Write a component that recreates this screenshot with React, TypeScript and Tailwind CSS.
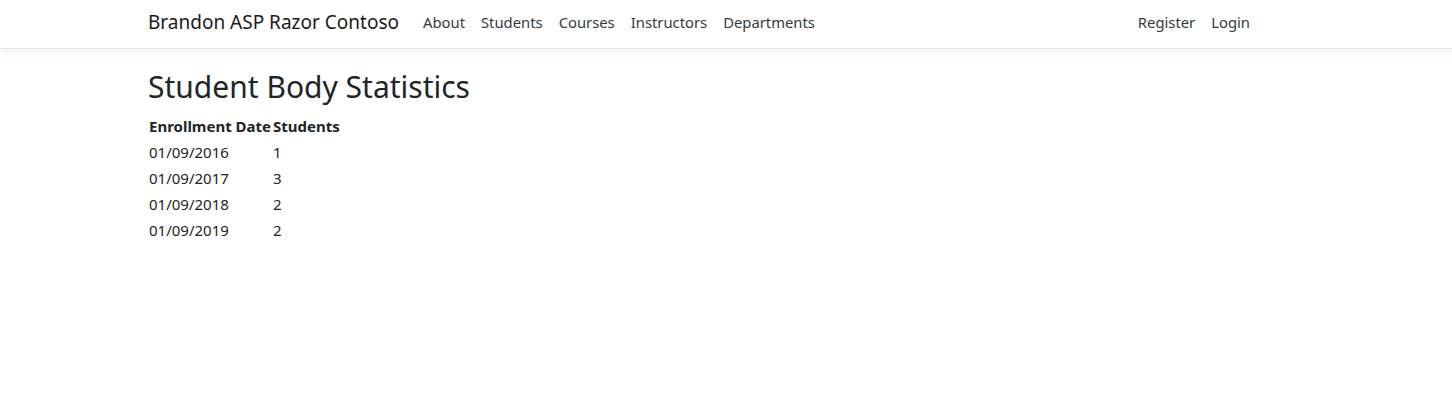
const rows = [
  { date: '01/09/2016', count: 1 },
  { date: '01/09/2017', count: 3 },
  { date: '01/09/2018', count: 2 },
  { date: '01/09/2019', count: 2 },
];

export default function App() {
  return (
    <div className="min-h-[400px] bg-white text-[#212529] font-['Noto_Sans',sans-serif]">
      <header className="h-[49px] border-b border-[#e5e5e5] shadow-[0_4px_12px_rgba(0,0,0,0.05)] bg-white">
        <nav className="ml-[148px] mr-[194px] h-full pb-[4px] flex items-center">
          <a className="text-[19px] text-[#1a1a1a] mr-[16px] leading-[30px]">Brandon ASP Razor Contoso</a>
          <ul className="flex items-center text-[14.8px] text-[#343a40]">
            <li className="px-[8px]">About</li>
            <li className="px-[8px]">Students</li>
            <li className="px-[8px]">Courses</li>
            <li className="px-[8px]">Instructors</li>
            <li className="px-[8px]">Departments</li>
          </ul>
          <ul className="ml-auto flex items-center text-[14.8px] text-[#343a40]">
            <li className="px-[8px]">Register</li>
            <li className="px-[8px]">Login</li>
          </ul>
        </nav>
      </header>
      <main className="ml-[148px] pt-[19px]">
        <h2 className="text-[30px] font-normal leading-[38px] mb-[7px]">Student Body Statistics</h2>
        <table className="border-collapse text-[15px] leading-[24px]">
          <thead>
            <tr>
              <th className="p-[1px] text-left font-bold">Enrollment Date</th>
              <th className="p-[1px] text-left font-bold">Students</th>
            </tr>
          </thead>
          <tbody>
            {rows.map((r) => (
              <tr key={r.date}>
                <td className="p-[1px]">{r.date}</td>
                <td className="p-[1px]">{r.count}</td>
              </tr>
            ))}
          </tbody>
        </table>
      </main>
    </div>
  );
}
